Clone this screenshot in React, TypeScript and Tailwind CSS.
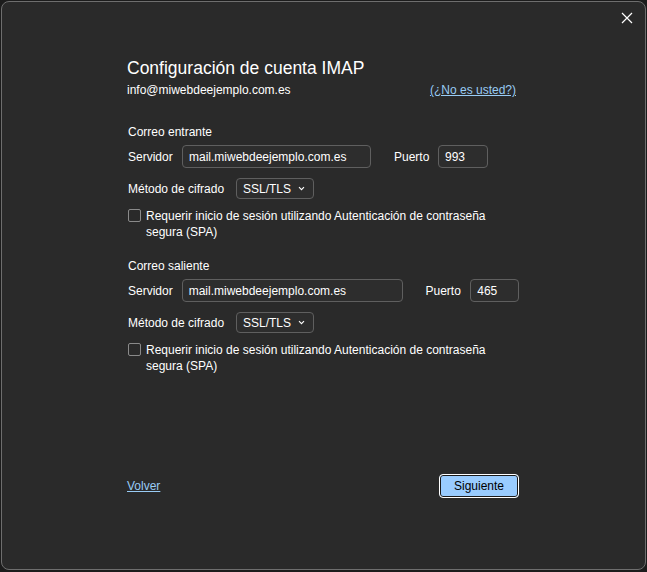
import React from "react";

const font = { fontFamily: '"Segoe UI", "Liberation Sans", Arial, sans-serif' };

function Field({ value, w }: { value: string; w: string }) {
  return (
    <div className={`h-[23px] ${w} rounded-[4px] border border-[#5f5f5f] bg-[#2d2d2d] px-[6px] flex items-center text-[12px] text-white leading-none`}>
      {value}
    </div>
  );
}

function Select() {
  return (
    <div className="h-[21px] w-[78px] rounded-[4px] border border-[#5f5f5f] bg-[#2d2d2d] pl-[6px] pr-[8px] flex items-center justify-between text-[12px] text-white leading-none">
      <span>SSL/TLS</span>
      <svg width="7" height="5" viewBox="0 0 7 5" fill="none">
        <path d="M1 1.2l2.5 2.5L6 1.2" stroke="#ffffff" strokeWidth="1.1" />
      </svg>
    </div>
  );
}

function Check() {
  return (
    <div className="flex items-start gap-[5px]">
      <div className="mt-[1px] w-[13px] h-[13px] rounded-[2px] border border-[#8a8a8a] shrink-0" />
      <div className="text-[12px] leading-[16px] text-white">
        Requerir inicio de sesión utilizando Autenticación de contraseña
        <br />
        segura (SPA)
      </div>
    </div>
  );
}

function Section({
  title,
  serverW,
  portBox,
  port,
  portW,
}: {
  title: string;
  serverW: string;
  portBox: string;
  port: string;
  portW: string;
}) {
  return (
    <div className="flex flex-col">
      <div className="pl-[1px] text-[12px] leading-[16px] text-white">{title}</div>
      <div className="mt-[5px] flex items-center pl-[1px]">
        <span className="text-[12px] text-white w-[54px]">Servidor</span>
        <Field value="mail.miwebdeejemplo.com.es" w={serverW} />
        <span className={`text-[12px] text-white ${portBox}`}>Puerto</span>
        <Field value={port} w={portW} />
      </div>
      <div className="mt-[10px] flex items-center pl-[1px]">
        <span className="text-[12px] text-white w-[108px]">Método de cifrado</span>
        <Select />
      </div>
      <div className="mt-[9px] pl-[1px]">
        <Check />
      </div>
    </div>
  );
}

export default function App() {
  return (
    <div className="w-[647px] h-[572px] bg-[#1c1c1c] p-[1px]" style={font}>
      <div className="relative w-[645px] h-[569px] rounded-[8px] border border-[#6e6e6e] bg-[#2a2a2a] flex flex-col pl-[125px] pr-[126px] pt-[55px]">
        <svg className="absolute right-[12px] top-[10px]" width="12" height="12" viewBox="0 0 12 12">
          <path d="M1 1l10 10M11 1L1 11" stroke="#ffffff" strokeWidth="1.2" />
        </svg>
        <div className="text-[17.5px] leading-[22px] text-white">Configuración de cuenta IMAP</div>
        <div className="mt-[2px] flex justify-between items-center text-[12px] leading-[18px]">
          <span className="text-white">info@miwebdeejemplo.com.es</span>
          <span className="mr-[3px] text-[#99ccf5] underline">(¿No es usted?)</span>
        </div>
        <div className="mt-[25px]">
          <Section title="Correo entrante" serverW="w-[189px]" portBox="w-[67px] pl-[23px]" port="993" portW="w-[50px]" />
        </div>
        <div className="mt-[18px]">
          <Section title="Correo saliente" serverW="w-[223px]" portBox="w-[67px] pl-[22px]" port="465" portW="w-[49px]" />
        </div>
        <div className="mt-auto mb-[71px] flex justify-between items-center">
          <span className="text-[12px] text-[#99ccf5] underline">Volver</span>
          <div className="w-[80px] h-[24px] rounded-[4px] border border-white bg-[#99ccff] flex items-center justify-center text-[12px] text-black shadow-[inset_0_0_0_1px_#1a1a1a]">
            Siguiente
          </div>
        </div>
      </div>
    </div>
  );
}
